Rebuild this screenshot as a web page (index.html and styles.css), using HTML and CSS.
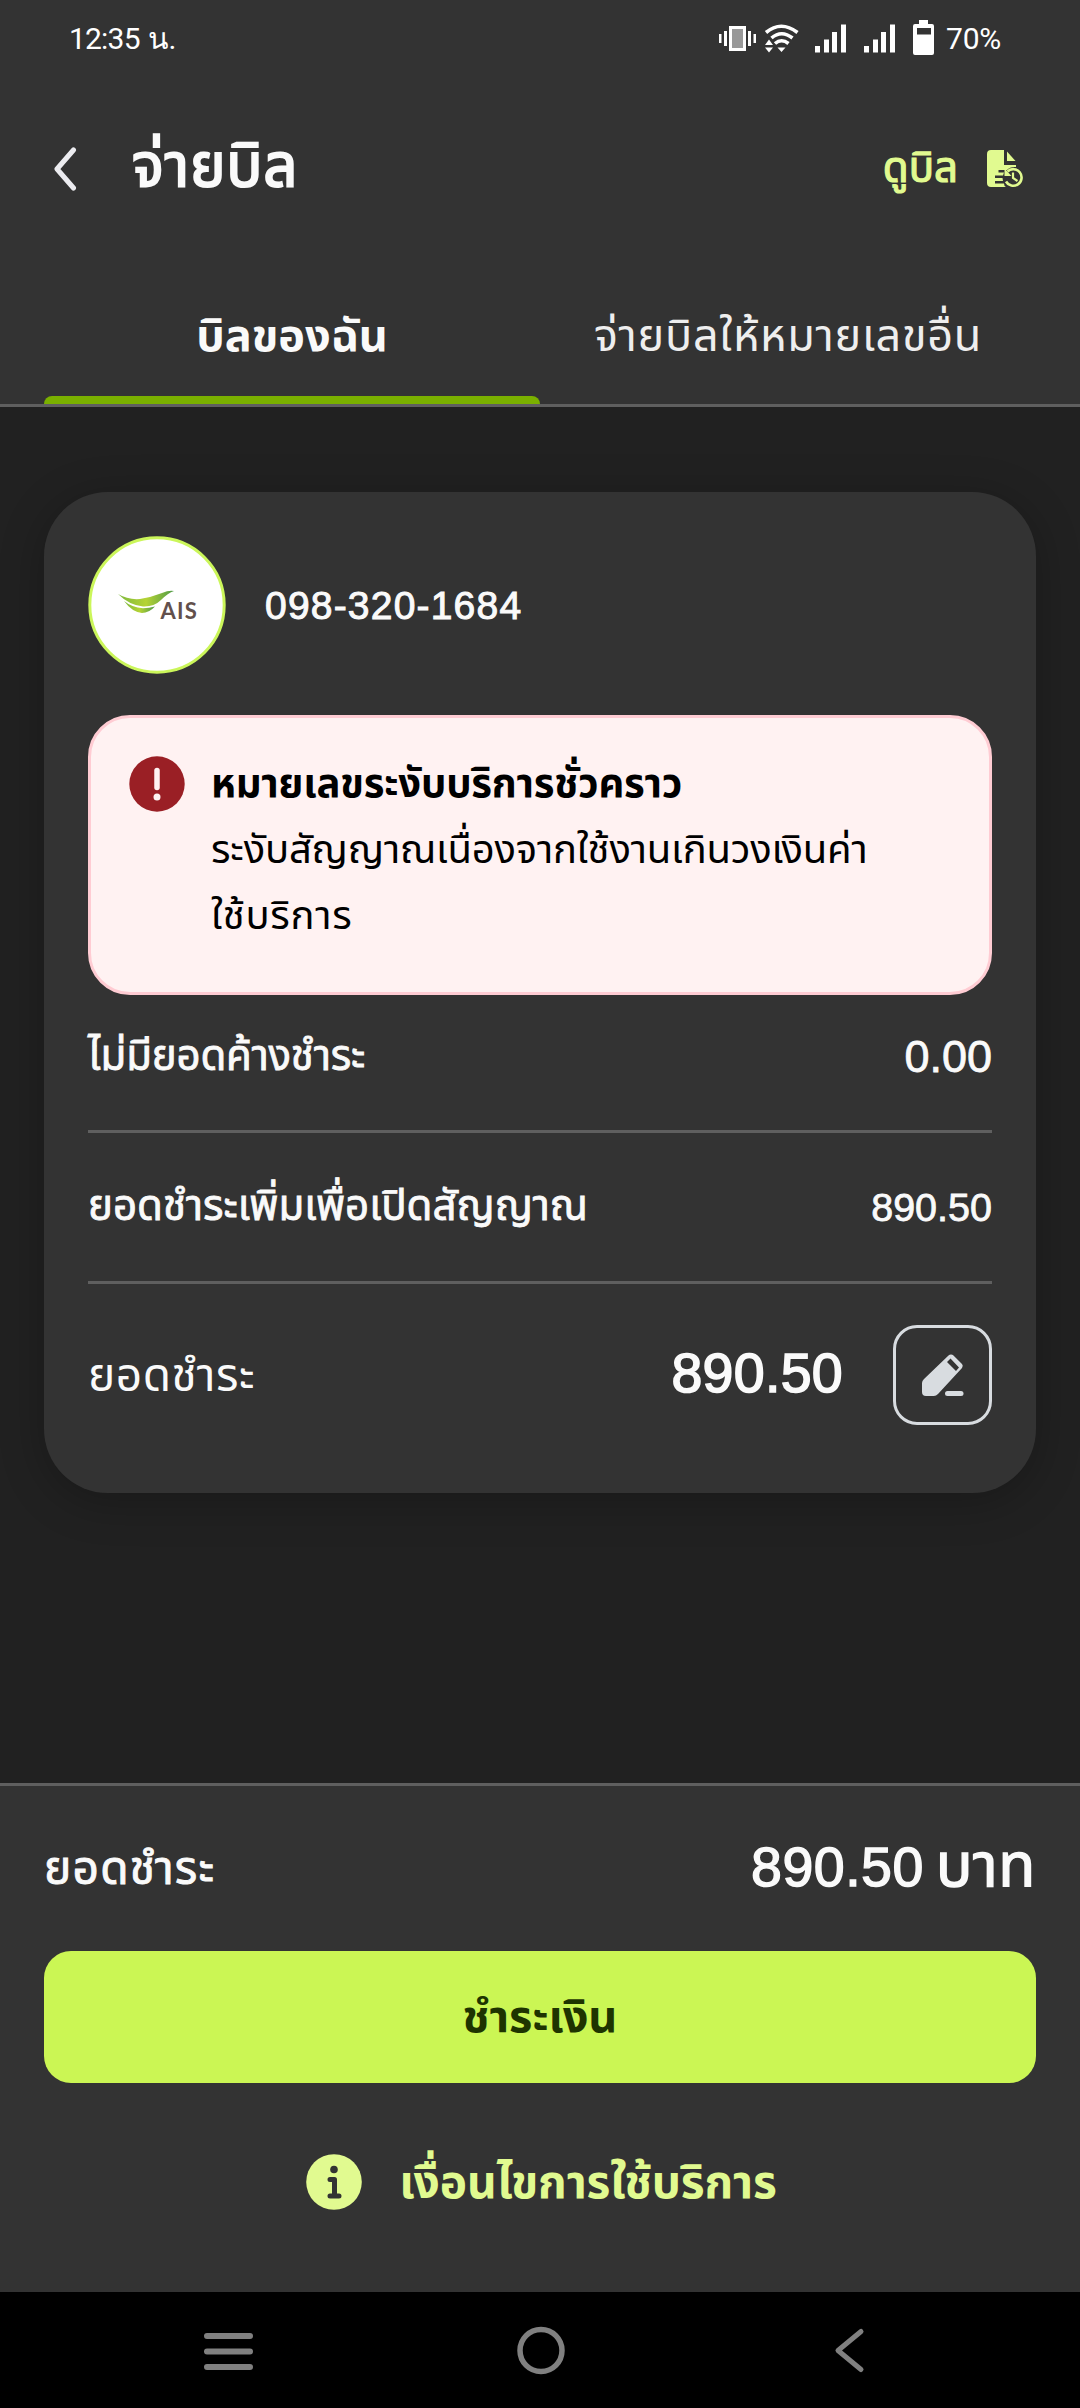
FILE: index.html
```html
<!DOCTYPE html>
<html lang="th">
<head>
<meta charset="utf-8">
<title>จ่ายบิล</title>
<link rel="stylesheet" href="styles.css">
</head>
<body>
<div class="screen">
  <div class="status">
    <span class="clock">12:35 น.</span>
    <svg class="status-icons" width="220" height="40" viewBox="715 18 220 40" fill="#fff">
      <path d="M719 34h2.500v9H719zM724 31h3v15h-3zM748 31h3v15h-3zM753.500 34h2.500v9h-2.500z"/>
      <rect x="730.500" y="27.500" width="14" height="22" fill="#999" stroke="#fff" stroke-width="3"/>
      <g fill="none" stroke="#fff" stroke-width="3.600">
        <path d="M766 32.500Q781 20 797.500 32.500"/><path d="M771.500 38Q781.500 29.500 792.500 38"/><path d="M775 43.500Q781.500 38 788.500 43.500"/>
      </g>
      <path d="M777.500 47.500h8l-4 4.500zM765 45l4-5.500 4 5.500zM765 47.500h8l-4 5z"/>
      <path d="M815 46h5v6.500h-5zM824 39.500h5v13h-5zM832 32h5v20.500h-5zM841 24.500h5v28h-5zM864 46h5v6.500h-5zM873 39.500h5v13h-5zM881 32h5v20.500h-5zM890 24.500h5v28h-5z"/>
      <path fill-rule="evenodd" d="M919 20h9v4h4q2 0 2 2v27q0 2-2 2h-17q-2 0-2-2V26q0-2 2-2h4zM917 28v6.500h14V28z"/>
    </svg>
    <span class="percent">70%</span>
  </div>
  <header class="header">
    <svg class="back" width="24" height="46" viewBox="0 0 24 46" fill="none" stroke="#ececf0" stroke-width="5" stroke-linecap="round" stroke-linejoin="round"><path d="M20.500 4L4 23l16.500 19"/></svg>
    <h1 class="title">จ่ายบิล</h1>
    <span class="bill-link">ดูบิล</span>
    <svg class="bill-icon" width="38" height="40" viewBox="0 0 38 40" fill="#e1fa90">
      <path d="M4 1h13v15h12v2q-6-.5-9 3h-8.500v2.500h5.500l-1 3H8v2.500h7.500l.5 3H8v2.500h9q0 2.500 2 3.500H4q-4 0-4-4V5q0-4 4-4z"/><path d="M20 2.500l8.500 9.500H20z"/>
      <path d="M20.500 22.500a8.300 8.300 0 1 1-1.500 10" fill="none" stroke="#e1fa90" stroke-width="2.600"/><path d="M17.500 19.500v7.500h7z"/><path d="M26 23.500v5.500l4.500 3" fill="none" stroke="#e1fa90" stroke-width="2.200"/>
    </svg>
  </header>
  <nav class="tabs">
    <div class="tab active"><span class="tab-own">บิลของฉัน</span></div>
    <div class="tab"><span class="tab-other">จ่ายบิลให้หมายเลขอื่น</span></div>
  </nav>
  <main class="content">
    <section class="card">
      <div class="account">
        <svg class="avatar" width="138" height="138" viewBox="0 0 138 138">
          <defs><linearGradient id="leaf"><stop offset="0" stop-color="#7cb83d"/><stop offset=".5" stop-color="#b5d334"/><stop offset="1" stop-color="#4f9a48"/></linearGradient></defs>
          <circle cx="69" cy="69" r="67.200" fill="#fff" stroke="#cbf65a" stroke-width="3"/>
          <path fill="url(#leaf)" d="M30 58Q40 64 52 63Q64 61 74 57Q81 54 86 55Q80 57 73 64Q66 71 55 70.500Q41 69 30 58z"/>
          <path fill="url(#leaf)" d="M36 65Q44 71.500 55 72.200Q61 72 67 70.500Q61 77 54 77Q44 76 36 65z"/>
          <text class="brand" x="72.500" y="83">AIS</text>
        </svg>
        <span class="phone">098-320-1684</span>
      </div>
      <div class="alert">
        <svg class="alert-icon" width="56" height="56" viewBox="0 0 56 56"><circle cx="28" cy="28" r="27.700" fill="#9a1f25"/><path d="M28 14.500v17" stroke="#fff2f2" stroke-width="5.500" stroke-linecap="round"/><circle cx="28" cy="41" r="3.500" fill="#fff2f2"/></svg>
        <div class="alert-text">
          <strong class="line1">หมายเลขระงับบริการชั่วคราว</strong>
          <span class="line2">ระงับสัญญาณเนื่องจากใช้งานเกินวงเงินค่า</span>
          <span class="line3">ใช้บริการ</span>
        </div>
      </div>
      <div class="row row-due"><span class="due-label">ไม่มียอดค้างชำระ</span><span class="due-value">0.00</span></div>
      <div class="row row-extra"><span class="extra-label">ยอดชำระเพิ่มเพื่อเปิดสัญญาณ</span><span class="extra-value">890.50</span></div>
      <div class="row row-pay"><span class="pay-label">ยอดชำระ</span><span class="pay-value">890.50</span>
        <span class="edit"><svg width="42" height="42" viewBox="0 0 42 42" fill="#d8dce0"><path fill-rule="evenodd" d="M29 .5q1.500 0 2.500 1l8.500 8.500q1.500 1.500 0 4L16 40q-2 2-4 2H4q-4 0-4-4V29q0-2 2-4L26.500 1.500q1-1 2.500-1zM28.500 4.500L25 8l9 9 3-3.500z"/><rect x="23" y="37" width="18.500" height="5" rx="2.500"/></svg></span>
      </div>
    </section>
  </main>
  <footer class="footer">
    <div class="total"><span class="total-label">ยอดชำระ</span><span class="total-value">890.50 <span class="unit">บาท</span></span></div>
    <div class="pay-button"><span class="pay-text">ชำระเงิน</span></div>
    <div class="terms">
      <svg width="56" height="56" viewBox="0 0 56 56"><circle cx="28" cy="28" r="27.800" fill="#e1fa90"/><circle cx="28" cy="15.500" r="3.800" fill="#333"/><path d="M24 25.500h4.500V42M24 42h9" fill="none" stroke="#333" stroke-width="5" stroke-linecap="round" stroke-linejoin="round"/></svg>
      <span class="terms-text">เงื่อนไขการใช้บริการ</span>
    </div>
  </footer>
  <div class="system-nav">
    <svg width="1080" height="116" viewBox="0 0 1080 116" fill="none" stroke="#808080" stroke-linecap="round" stroke-linejoin="round"><path stroke-width="6" d="M207 44h43M207 59.500h43M207 75h43"/><circle cx="541" cy="58.500" r="21" stroke-width="5.500"/><path stroke-width="5" d="M861 39.500L838 58.500l23 19"/></svg>
  </div>
</div>
</body>
</html>
```
FILE: styles.css
```css
* { box-sizing: border-box; margin: 0; padding: 0; }
body { width: 1080px; background: #212121; color: #fafafa; font-family: "Liberation Sans", "Noto Sans Thai", sans-serif; }
svg { display: block; flex: none; }
span, h1, strong { white-space: nowrap; }
.screen { width: 1080px; height: 2408px; display: flex; flex-direction: column; overflow: hidden; }
.status { height: 78px; background: #333; display: flex; padding: 18px 0 0 69px; }
.clock, .percent { font-family: Roboto, "Liberation Sans", sans-serif; font-size: 30px; line-height: 42px; color: #fff; }
.clock { letter-spacing: -0.8px; word-spacing: 2px; }
.status-icons { margin-left: auto; }
.percent { width: 145px; padding-left: 11px; letter-spacing: -0.2px; }
.header { height: 202px; background: #333; display: flex; align-items: flex-start; padding: 62px 55px 0 53px; }
.back { margin-top: 6px; }
.title { margin: -4px 0 0 55px; font-size: 60px; line-height: 60px; font-weight: 400; letter-spacing: 0.8px; -webkit-text-stroke: 2px; }
.bill-link { margin: -2px 0 0 auto; font-size: 42px; line-height: 60px; color: #e1fa90; -webkit-text-stroke: 1.2px; }
.bill-icon { margin: 9px 0 0 29px; }
.tabs { height: 127px; background: #333; border-bottom: 3px solid #5f5f5f; display: flex; padding: 0 44px; }
.tab { width: 496px; display: flex; justify-content: center; padding-top: 26px; font-size: 45px; line-height: 60px; color: #eee; }
.tab-other { letter-spacing: 0.7px; }
.tab.active { position: relative; font-weight: 700; color: #fafafa; }
.tab.active::after { content: ""; position: absolute; left: 0; bottom: 0; width: 100%; height: 8px; border-radius: 8px 8px 0 0; background: #7ab000; }
.content { height: 1376px; padding: 85px 44px 0; }
.card { height: 1001px; border-radius: 64px; background: #333; padding: 44px; box-shadow: 0 8px 44px rgba(0,0,0,.25); }
.account { display: flex; align-items: center; height: 138px; }
.phone { margin: 1px 0 0 39px; font-size: 39px; letter-spacing: 1.2px; -webkit-text-stroke: 1px; }
.brand { font: 700 22px "Lato", "Liberation Sans", sans-serif; fill: #62504c; letter-spacing: 1.2px; }
.alert { margin-top: 41px; height: 280px; border: 3px solid #ffccd3; border-radius: 42px; background: #fff2f2; color: #000; display: flex; padding: 38px; }
.alert-text { margin: -6px 0 0 26px; display: flex; flex-direction: column; font-size: 40px; line-height: 66px; letter-spacing: -0.2px; }
.line3 { letter-spacing: 0.7px; }
.row { display: flex; align-items: center; justify-content: space-between; font-size: 42px; -webkit-text-stroke: 0.8px; }
.row-due { height: 138px; border-bottom: 3px solid #5f5f5f; padding-bottom: 12px; }
.due-label { letter-spacing: -0.2px; }
.due-value { font-size: 45px; padding-top: 1px; }
.row-extra { height: 151px; border-bottom: 3px solid #5f5f5f; }
.extra-value { font-size: 39.500px; }
.row-pay { height: 182px; }
.pay-label { font-size: 46px; padding-top: 3px; letter-spacing: 0.5px; -webkit-text-stroke: 0; }
.pay-value { margin-left: auto; padding-bottom: 4px; font-size: 55.500px; letter-spacing: 0.3px; -webkit-text-stroke: 1.6px; }
.edit { width: 99px; height: 100px; margin-left: 50px; border: 3px solid #d8dce0; border-radius: 24px; display: flex; align-items: center; justify-content: center; }
.footer { height: 509px; background: #333; border-top: 3px solid #5f5f5f; padding: 0 44px; }
.total { height: 165px; display: flex; align-items: center; justify-content: space-between; font-size: 46px; -webkit-text-stroke: 0.9px; }
.total-label { padding-top: 2px; letter-spacing: 1.2px; }
.total-value { padding-bottom: 6px; font-size: 55.500px; line-height: 66px; letter-spacing: 0.5px; word-spacing: -4px; -webkit-text-stroke: 1.4px; }
.unit { font-size: 61px; }
.pay-button { height: 132px; border-radius: 27px; background: #cbf654; color: #1e3400; display: flex; align-items: center; justify-content: center; padding-top: 2px; font-size: 45px; font-weight: 700; }
.terms { margin-top: 71px; display: flex; align-items: center; justify-content: center; gap: 37px; padding-left: 3px; color: #e1fa90; font-size: 46px; line-height: 56px; font-weight: 700; letter-spacing: -0.1px; }
.system-nav { height: 116px; background: #000; }
```
